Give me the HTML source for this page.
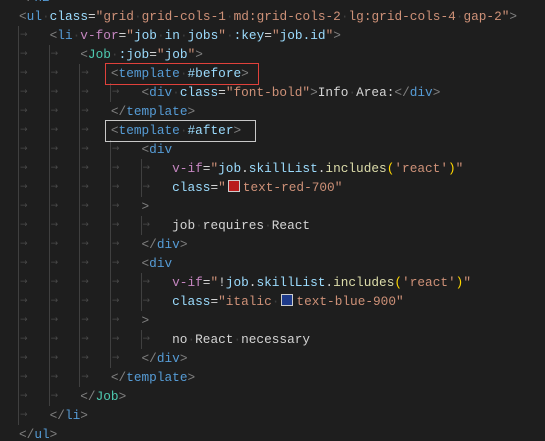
<!DOCTYPE html>
<html><head><meta charset="utf-8"><style>
html,body{margin:0;padding:0;background:#1e1e1e;width:545px;height:441px;overflow:hidden;position:relative}
#code{position:absolute;left:19px;top:-12.5px}
.l{white-space:pre;font-family:"Liberation Mono",monospace;font-size:12.77px;line-height:19px;height:19px;color:#d4d4d4}
.p{color:#808080}.t{color:#569cd6}.a{color:#9cdcfe}.s{color:#ce9178}.c{color:#4ec9b0}.d{color:#c586c0}.f{color:#dcdcaa}.y{color:#ffd700}.w{color:#3e3e3e}
.g{position:absolute;width:1px;background:#404040}
.tb{display:inline-block;width:30.64px;font-family:"DejaVu Sans",sans-serif;font-size:9px;color:#4a4a4a;text-indent:1px;vertical-align:top}
.sw{display:inline-block;width:10px;height:10px;border:1px solid #ccc;vertical-align:-1px;margin:0 3px 0 2px}
.box{position:absolute;border:1px solid #e0413b}
</style></head><body>
<div class="g" style="left:18px;top:25.5px;height:399px"></div>
<div class="g" style="left:48.6px;top:44.5px;height:361px"></div>
<div class="g" style="left:79.3px;top:63.5px;height:323px"></div>
<div class="g" style="left:109.9px;top:82.5px;height:19px"></div>
<div class="g" style="left:109.9px;top:139.5px;height:228px"></div>
<div class="g" style="left:140.6px;top:158.5px;height:38px"></div>
<div class="g" style="left:140.6px;top:215.5px;height:19px"></div>
<div class="g" style="left:140.6px;top:272.5px;height:38px"></div>
<div class="g" style="left:140.6px;top:329.5px;height:19px"></div>
<div class="box" style="left:105px;top:63px;width:152px;height:20px"></div>
<div class="box" style="left:105px;top:120px;width:149px;height:20px;border-color:#c8c8c8"></div>
<div id="code">
<div class="l"><span class="p">&lt;/</span><span class="t">h2</span><span class="p">&gt;</span></div>
<div class="l"><span class="p">&lt;</span><span class="t">ul</span><span class="w">·</span><span class="a">class</span>=<span class="s">"grid<span class="w">·</span>grid-cols-1<span class="w">·</span>md:grid-cols-2<span class="w">·</span>lg:grid-cols-4<span class="w">·</span>gap-2"</span><span class="p">&gt;</span></div>
<div class="l"><span class="tb">→</span><span class="p">&lt;</span><span class="t">li</span><span class="w">·</span><span class="d">v-for</span>=<span class="s">"</span><span class="a">job</span><span class="w">·</span><span class="a">in</span><span class="w">·</span><span class="a">jobs</span><span class="s">"</span><span class="w">·</span><span class="a">:key</span>=<span class="s">"</span><span class="a">job.id</span><span class="s">"</span><span class="p">&gt;</span></div>
<div class="l"><span class="tb">→</span><span class="tb">→</span><span class="p">&lt;</span><span class="c">Job</span><span class="w">·</span><span class="a">:job</span>=<span class="s">"</span><span class="a">job</span><span class="s">"</span><span class="p">&gt;</span></div>
<div class="l"><span class="tb">→</span><span class="tb">→</span><span class="tb">→</span><span class="p">&lt;</span><span class="t">template</span><span class="w">·</span><span class="a">#before</span><span class="p">&gt;</span></div>
<div class="l"><span class="tb">→</span><span class="tb">→</span><span class="tb">→</span><span class="tb">→</span><span class="p">&lt;</span><span class="t">div</span><span class="w">·</span><span class="a">class</span>=<span class="s">"font-bold"</span><span class="p">&gt;</span>Info<span class="w">·</span>Area:<span class="p">&lt;/</span><span class="t">div</span><span class="p">&gt;</span></div>
<div class="l"><span class="tb">→</span><span class="tb">→</span><span class="tb">→</span><span class="p">&lt;/</span><span class="t">template</span><span class="p">&gt;</span></div>
<div class="l"><span class="tb">→</span><span class="tb">→</span><span class="tb">→</span><span class="p">&lt;</span><span class="t">template</span><span class="w">·</span><span class="a">#after</span><span class="p">&gt;</span></div>
<div class="l"><span class="tb">→</span><span class="tb">→</span><span class="tb">→</span><span class="tb">→</span><span class="p">&lt;</span><span class="t">div</span></div>
<div class="l"><span class="tb">→</span><span class="tb">→</span><span class="tb">→</span><span class="tb">→</span><span class="tb">→</span><span class="d">v-if</span>=<span class="s">"</span><span class="a">job</span>.<span class="a">skillList</span>.<span class="f">includes</span><span class="y">(</span><span class="s">'react'</span><span class="y">)</span><span class="s">"</span></div>
<div class="l"><span class="tb">→</span><span class="tb">→</span><span class="tb">→</span><span class="tb">→</span><span class="tb">→</span><span class="a">class</span>=<span class="s">"</span><span class="sw" style="background:#b91c1c"></span><span class="s">text-red-700"</span></div>
<div class="l"><span class="tb">→</span><span class="tb">→</span><span class="tb">→</span><span class="tb">→</span><span class="p">&gt;</span></div>
<div class="l"><span class="tb">→</span><span class="tb">→</span><span class="tb">→</span><span class="tb">→</span><span class="tb">→</span>job<span class="w">·</span>requires<span class="w">·</span>React</div>
<div class="l"><span class="tb">→</span><span class="tb">→</span><span class="tb">→</span><span class="tb">→</span><span class="p">&lt;/</span><span class="t">div</span><span class="p">&gt;</span></div>
<div class="l"><span class="tb">→</span><span class="tb">→</span><span class="tb">→</span><span class="tb">→</span><span class="p">&lt;</span><span class="t">div</span></div>
<div class="l"><span class="tb">→</span><span class="tb">→</span><span class="tb">→</span><span class="tb">→</span><span class="tb">→</span><span class="d">v-if</span>=<span class="s">"</span>!<span class="a">job</span>.<span class="a">skillList</span>.<span class="f">includes</span><span class="y">(</span><span class="s">'react'</span><span class="y">)</span><span class="s">"</span></div>
<div class="l"><span class="tb">→</span><span class="tb">→</span><span class="tb">→</span><span class="tb">→</span><span class="tb">→</span><span class="a">class</span>=<span class="s">"italic</span><span class="w">·</span><span class="sw" style="background:#1e3a8a"></span><span class="s">text-blue-900"</span></div>
<div class="l"><span class="tb">→</span><span class="tb">→</span><span class="tb">→</span><span class="tb">→</span><span class="p">&gt;</span></div>
<div class="l"><span class="tb">→</span><span class="tb">→</span><span class="tb">→</span><span class="tb">→</span><span class="tb">→</span>no<span class="w">·</span>React<span class="w">·</span>necessary</div>
<div class="l"><span class="tb">→</span><span class="tb">→</span><span class="tb">→</span><span class="tb">→</span><span class="p">&lt;/</span><span class="t">div</span><span class="p">&gt;</span></div>
<div class="l"><span class="tb">→</span><span class="tb">→</span><span class="tb">→</span><span class="p">&lt;/</span><span class="t">template</span><span class="p">&gt;</span></div>
<div class="l"><span class="tb">→</span><span class="tb">→</span><span class="p">&lt;/</span><span class="c">Job</span><span class="p">&gt;</span></div>
<div class="l"><span class="tb">→</span><span class="p">&lt;/</span><span class="t">li</span><span class="p">&gt;</span></div>
<div class="l"><span class="p">&lt;/</span><span class="t">ul</span><span class="p">&gt;</span></div>
</div>
</body></html>
